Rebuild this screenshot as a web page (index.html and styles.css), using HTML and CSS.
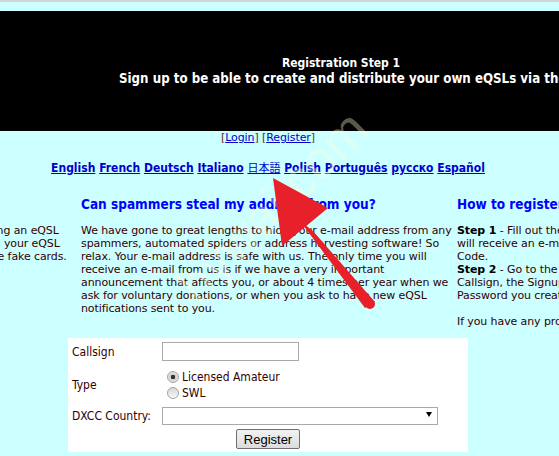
FILE: index.html
```html
<!DOCTYPE html>
<html lang="en">

<head>
    <meta charset="UTF-8">
    <meta name="viewport" content="width=device-width, initial-scale=1.0">
    <title>eQSL Registration</title>
    <link rel="stylesheet" href="styles.css">
</head>

<body>
    <div class="page">
        <div class="banner">
            <div class="banner-text">
                <div class="banner-title">Registration Step 1</div>
                <div class="banner-sub">Sign up to be able to create and distribute your own eQSLs via the Internet</div>
            </div>
        </div>

        <div class="account-links">[<a href="#">Login</a>] [<a href="#">Register</a>]</div>

        <div class="languages">
            <a href="#">English</a>
            <a href="#">French</a>
            <a href="#">Deutsch</a>
            <a href="#">Italiano</a>
            <a href="#" class="cjk">日本語</a>
            <a href="#">Polish</a>
            <a href="#">Português</a>
            <a href="#">русско</a>
            <a href="#">Español</a>
        </div>

        <div class="columns">
            <div class="col">
                <h2>Why do I have to register?</h2>
                <p>Registration is required here before sending or receiving an eQSL
                    because other users can be sure that they are viewing your eQSL
                    without anyone being able to create, send, and receive fake cards.</p>
            </div>
            <div class="col">
                <h2>Can spammers steal my address from you?</h2>
                <p>We have gone to great lengths to hide your <span class="nb">e-mail</span> address from any
                    spammers, automated spiders or address harvesting software! So
                    relax. Your <span class="nb">e-mail</span> address is safe with us. The only time you will
                    receive an <span class="nb">e-mail</span> from us is if we have a very important
                    announcement that affects you, or about 4 times per year when we
                    ask for voluntary donations, or when you ask to have new eQSL
                    notifications sent to you.</p>
            </div>
            <div class="col">
                <h2>How to register</h2>
                <p><b>Step 1</b> - Fill out the form below and hit Register. Shortly after you
                    will receive an <span class="nb">e-mail</span> message quickly containing your own Signup
                    Code.<br>
                    <b>Step 2</b> - Go to the link shown in that <span class="nb">e-mail</span> and then enter your
                    Callsign, the Signup Code from that <span class="nb">e-mail</span> message, and the
                    Password you create there.</p>
                <p>If you have any problems, please read the FAQ first.</p>
            </div>
        </div>

        <form class="reg-form">
            <div class="form-row">
                <label class="form-label" for="callsign">Callsign</label>
                <input type="text" id="callsign" class="text-input">
            </div>
            <div class="form-row">
                <span class="form-label">Type</span>
                <div class="radios">
                    <label><input type="radio" name="type" checked> Licensed Amateur</label>
                    <label><input type="radio" name="type"> SWL</label>
                </div>
            </div>
            <div class="form-row">
                <label class="form-label" for="dxcc">DXCC Country:</label>
                <span class="select-wrap"><select id="dxcc"><option></option></select></span>
            </div>
            <div class="submit-row">
                <button type="button">Register</button>
            </div>
        </form>
    </div>

    <!-- annotation drawn over the screenshot -->
    <div class="watermark">hywai.com</div>
    <svg class="arrow" width="559" height="456" viewBox="0 0 559 456">
        <polygon points="273,178 282,246 328,208" fill="#e8202a" />
        <polygon points="300,221 313,231 375,302 365,308" fill="#e8202a" />
        <circle cx="370" cy="304" r="5" fill="#e8202a" />
    </svg>
</body>

</html>
```

FILE: styles.css
```css
html,
body {
    margin: 0;
    padding: 0;
}

body {
    background-color: #ccffff;
    border-top: 2px solid #d4d4d4;
    overflow: hidden;
    height: 454px;
    font-family: "DejaVu Sans", Verdana, sans-serif;
    font-size: 11px;
    line-height: 13px;
    letter-spacing: -0.1px;
    color: #330000;
}

/* the page is wider than the window, scrolled to the right */
.page {
    width: 1128px;
    margin-left: -296px;
}

.banner {
    margin-top: 9px;
    height: 120px;
    padding-top: 44px;
    box-sizing: border-box;
    background-color: #000;
    color: #fff;
    font-family: "DejaVu Sans Condensed", "DejaVu Sans", sans-serif;
    font-weight: bold;
    font-size: 12px;
    line-height: 16px;
    letter-spacing: 0;
}

.banner-text {
    margin-left: 415px;
}

.banner-title {
    width: 444px;
    text-align: center;
}

.banner-sub {
    white-space: nowrap;
    font-size: 13.2px;
}

a {
    color: #0000cc;
}

.nb {
    white-space: nowrap;
}

.account-links {
    text-align: center;
    color: #663300;
}

.languages {
    margin-top: 16px;
    text-align: center;
    font-family: "DejaVu Sans Condensed", "DejaVu Sans", sans-serif;
    font-weight: bold;
    font-size: 12px;
    line-height: 15px;
    letter-spacing: 0;
}

.languages .cjk {
    font-family: "Noto Sans CJK JP", sans-serif;
    font-weight: normal;
    font-size: 11px;
}

.columns {
    display: grid;
    grid-template-columns: repeat(3, 1fr);
    margin-top: 20px;
}

.col {
    padding: 0 2px 0 1px;
}

.col h2 {
    margin: 0 0 12px;
    color: #0000ff;
    font-family: "DejaVu Sans Condensed", "DejaVu Sans", sans-serif;
    font-size: 13.5px;
    line-height: 16px;
    letter-spacing: 0;
}

.col p {
    margin: 0 0 13px;
}

.col p:last-child {
    margin-bottom: 0;
}

.col b {
    color: #000;
}

.reg-form {
    width: 400px;
    margin: 10px auto 0;
    padding: 4px 4px 3px;
    box-sizing: border-box;
    background-color: #fff;
    font-family: "DejaVu Sans Condensed", "DejaVu Sans", sans-serif;
    font-size: 12px;
    line-height: 16px;
    letter-spacing: 0;
}

.form-row {
    display: flex;
    align-items: center;
    margin-bottom: 8px;
}

.form-row:nth-child(2) {
    margin-bottom: 6px;
}

.form-row:nth-child(3) {
    margin-bottom: 4px;
}

.form-label {
    width: 90px;
    flex-shrink: 0;
}

.text-input {
    width: 137px;
    height: 19px;
    box-sizing: border-box;
    border: 1px solid #a9a9a9;
    margin: 0;
    padding: 0 2px;
}

.radios label {
    display: flex;
    align-items: center;
    height: 16px;
}

.radios input {
    appearance: none;
    width: 12px;
    height: 12px;
    margin: 0 3px 0 5px;
    border: 1px solid #a4a4a4;
    border-radius: 50%;
    background: linear-gradient(#d6d6d6, #f8f8f8);
    box-sizing: border-box;
}

.radios input:checked {
    background: radial-gradient(circle, #333 0, #333 2px, #cfcfcf 2.5px, #f4f4f4 100%);
}

.select-wrap {
    position: relative;
    display: block;
}

.select-wrap select {
    appearance: none;
    width: 276px;
    height: 18px;
    margin: 0;
    border: 1px solid #a9a9a9;
    border-radius: 0;
    background-color: #fff;
}

.select-wrap::after {
    content: "";
    position: absolute;
    right: 6px;
    top: 5px;
    border-left: 3px solid transparent;
    border-right: 3px solid transparent;
    border-top: 5px solid #000;
}

.submit-row {
    text-align: center;
}

.submit-row button {
    width: 64px;
    height: 20px;
    padding: 0;
    border: 1px solid #707070;
    border-radius: 2px;
    background: linear-gradient(#f2f2f2, #dcdcdc);
    font-family: "Liberation Sans", Arial, sans-serif;
    font-size: 13px;
    color: #000;
    vertical-align: top;
}

.arrow {
    position: absolute;
    left: 0;
    top: 0;
    pointer-events: none;
}

.watermark {
    position: absolute;
    left: 150px;
    top: 200px;
    transform: rotate(-45deg);
    font-family: "Liberation Sans", sans-serif;
    font-size: 52px;
    color: rgba(255, 255, 224, 0.35);
    pointer-events: none;
}
```
